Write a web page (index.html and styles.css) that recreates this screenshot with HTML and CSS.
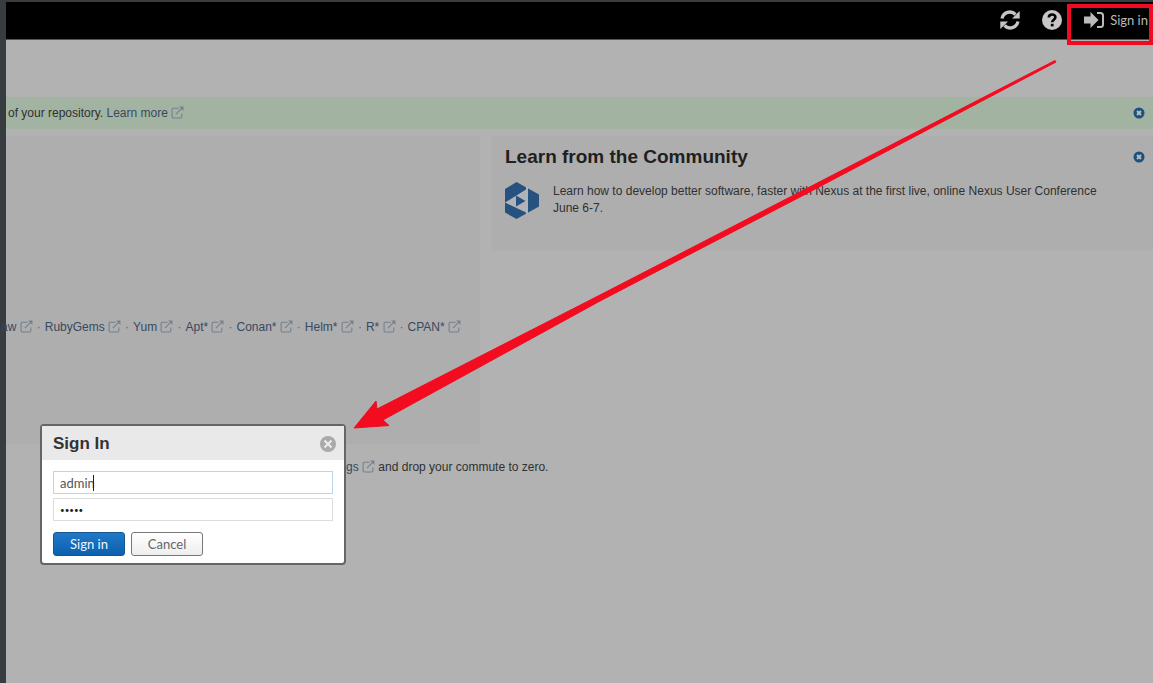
FILE: index.html
```
<!DOCTYPE html>
<html lang="en">
<head>
<meta charset="utf-8">
<title>Repository Manager</title>
<link rel="stylesheet" href="styles.css">
</head>
<body>
<svg class="sprite" aria-hidden="true">
  <symbol id="ext" viewBox="0 0 12 12"><path d="M7 2H2Q1 2 1 3v7q0 1 1 1h7q1 0 1-1V7M4.500 7.500L10.500 1.500" fill="none" stroke="currentColor" stroke-width="1"/><path d="M7.500 0.500h4v4z" fill="currentColor"/></symbol>
  <symbol id="close" viewBox="0 0 12 12"><circle cx="6" cy="6" r="5.500" fill="#1f4f7d"/><path d="M4 4l4 4M8 4l-4 4" stroke="#b4bfc4" stroke-width="2"/></symbol>
</svg>
<div class="app">
  <header class="topbar">
    <button class="tool" aria-label="Refresh"><svg width="20" height="20" viewBox="0 0 20 20"><path d="M2 8.500A8 8 0 0 1 15.500 4.500M18 11.500A8 8 0 0 1 4.500 15.500" fill="none" stroke="currentColor" stroke-width="3.400"/><path d="M19.700 1v7.500H12zM.3 19v-7.500H8z" fill="currentColor"/></svg></button>
    <button class="tool" aria-label="Help"><svg width="20" height="20" viewBox="0 0 20 20"><circle cx="10" cy="10" r="10" fill="currentColor"/><path d="M6.800 7.500C7 3.500 13.400 3.700 13.400 7.300c0 2.400-3.200 2.400-3.200 4.900" fill="none" stroke="#000" stroke-width="2.600"/><path d="M8.800 13.800h2.800v2.600H8.800z" fill="#000"/></svg></button>
    <button class="signin"><svg width="20" height="18" viewBox="0 0 20 18"><path d="M0 5.500h6.500V1L14.500 9l-8 8V12.500H0z" fill="currentColor"/><path d="M13 2h3.500Q19 2 19 4.500v9q0 2.500-2.500 2.500H13" fill="none" stroke="currentColor" stroke-width="2"/></svg><span>Sign in</span></button>
  </header>
  <main class="page">
    <section class="banner">
      <p>of your repository. <a href="#">Learn more <svg class="ext"><use href="#ext"/></svg></a></p>
      <button class="close" aria-label="Dismiss message"><svg width="12" height="12"><use href="#close"/></svg></button>
    </section>
    <div class="columns">
      <section class="panel formats">
        <nav class="links">
          <a href="#">aw <svg class="ext"><use href="#ext"/></svg></a> · <a href="#">RubyGems <svg class="ext"><use href="#ext"/></svg></a> · <a href="#">Yum <svg class="ext"><use href="#ext"/></svg></a> · <a href="#">Apt* <svg class="ext"><use href="#ext"/></svg></a> · <a href="#">Conan* <svg class="ext"><use href="#ext"/></svg></a> · <a href="#">Helm* <svg class="ext"><use href="#ext"/></svg></a> · <a href="#">R* <svg class="ext"><use href="#ext"/></svg></a> · <a href="#">CPAN* <svg class="ext"><use href="#ext"/></svg></a>
        </nav>
      </section>
      <section class="panel community">
        <div class="panel-head">
          <h2>Learn from the Community</h2>
          <button class="close" aria-label="Dismiss panel"><svg width="12" height="12"><use href="#close"/></svg></button>
        </div>
        <div class="story">
          <svg class="logo" width="34" height="38" viewBox="0 0 34 38"><path d="M0 7L11.500 0 34 12.500V24.500L11.500 37 0 30.500z" fill="#27527f"/><path d="M0 20.500L21 7.500V5h2v27h-2v-1.500z" fill="#b0b4b8"/><path d="M11 13.500L20.500 19 11 24.500z" fill="#27527f"/></svg>
          <p>Learn how to develop better software, faster with Nexus at the first live, online Nexus User Conference<br>June 6-7.</p>
        </div>
      </section>
    </div>
    <p class="commute"><a href="#">gs <svg class="ext"><use href="#ext"/></svg></a> and drop your commute to zero.</p>
  </main>
</div>
<form class="dialog" role="dialog" aria-labelledby="dialog-title">
  <div class="dialog-head">
    <h1 id="dialog-title">Sign In</h1>
    <button type="button" class="close" aria-label="Close"><svg width="16" height="16" viewBox="0 0 16 16"><circle cx="8" cy="8" r="8" fill="#aaa"/><path d="M4.500 4.500l7 7M11.500 4.500l-7 7" stroke="#eee" stroke-width="2"/></svg></button>
  </div>
  <div class="dialog-body">
    <div class="field focused"><input type="text" value="admin" aria-label="Username"><i class="caret"></i></div>
    <div class="field"><input type="password" value="admin" aria-label="Password"></div>
    <div class="actions">
      <button type="submit" class="btn primary">Sign in</button>
      <button type="button" class="btn">Cancel</button>
    </div>
  </div>
</form>
<div class="highlight"></div>
<svg class="arrow" width="704" height="372" viewBox="0 0 704 372"><path d="M701 0.500L702 2 446 137 246 241 29 360 35 365.500 0 368 22 341 23 349 246 235Z" fill="#f30b20" stroke="#f30b20" stroke-linejoin="round"/></svg>
</body>
</html>
```

FILE: styles.css
```
* { box-sizing: border-box; }
body {
  margin: 0;
  min-height: 100vh;
  padding: 2px 0 0 6px;
  position: relative;
  overflow: hidden;
  display: flex;
  background: #373c41;
  color: #303030;
  font: 12px/17px "Liberation Sans", Arial, sans-serif;
}
h1, h2, p { margin: 0; }
a { color: #38495f; text-decoration: none; }
button { margin: 0; padding: 0; border: 0; background: none; font: inherit; color: inherit; }
button svg { display: block; }
.sprite { position: absolute; width: 0; height: 0; }
.app { flex: 1; background: #b2b2b2; min-width: 0; }
.topbar {
  height: 38px;
  padding: 0 5px 2px 0;
  border-bottom: 1px solid #555;
  background: #000;
  color: #c6c6c6;
  display: flex;
  justify-content: flex-end;
  align-items: center;
  gap: 22px;
}
.signin { display: flex; align-items: center; gap: 6px; font: 13px/18px Lato, sans-serif; color: #bbb; }
.page { padding-top: 57px; }
.banner {
  height: 32px;
  padding: 0 8px 0 2px;
  background: #a2b3a2;
  display: flex;
  align-items: center;
  justify-content: space-between;
}
.ext { width: 13px; height: 13px; vertical-align: -2px; color: #75808d; }
.columns { display: grid; grid-template-columns: 474fr 662fr; align-items: start; gap: 11px; padding-top: 7px; }
.panel { background: #aeaeae; min-width: 0; }
.formats { height: 308px; padding: 183px 19px 0 0; }
.links { display: flex; justify-content: flex-end; gap: 4px; white-space: nowrap; color: #666; }
.community { height: 115px; padding: 9px 8px 0 14px; }
.panel-head { display: flex; justify-content: space-between; align-items: center; }
h2 { font-size: 19px; line-height: 24px; color: #1f1f1f; }
.story { display: flex; gap: 14px; padding-top: 13px; }
.story p { padding-top: 1px; flex: 1; }
.logo { flex: none; }
.commute { padding: 15px 0 0 340px; }

.dialog {
  position: absolute;
  left: 40px;
  top: 424px;
  width: 306px;
  border: 2px solid #656565;
  border-radius: 4px;
  background: #fff;
  font: 12px/16px Lato, sans-serif;
}
.dialog-head {
  height: 34px;
  padding: 2px 8px 0 11px;
  background: #e9e9e9;
  display: flex;
  align-items: center;
  justify-content: space-between;
}
h1 { font: bold 17px/22px "Liberation Sans", Arial, sans-serif; color: #333; }
.dialog-body { padding: 11px 11px 7px; display: grid; gap: 4px; }
.field { height: 23px; position: relative; border: 1px solid #dcdcdc; }
.focused { border-color: #b8d6f2; }
.field input { display: block; width: 100%; height: 21px; padding: 0 6px; border: 0; outline: 0; background: none; font: 13px/16px Lato, sans-serif; color: #555; }
.field input[type="password"] { font-size: 8px; color: #222; }
.caret { position: absolute; left: 39px; top: 3px; width: 1px; height: 16px; background: #222; }
.actions { display: flex; gap: 6px; padding-top: 7px; }
.btn { width: 72px; height: 24px; border: 1px solid #777; border-radius: 3px; background: linear-gradient(#fff, #eee); color: #666; font: 13px/16px Lato, sans-serif; }
.primary { background: linear-gradient(#2079c8, #0d60ae); border-color: #17568f; color: #eef5fb; }
.highlight { position: absolute; right: 0; top: 4px; width: 86px; height: 41px; border: 4px solid #f10a22; }
.arrow { position: absolute; left: 354px; top: 60px; pointer-events: none; }
```
